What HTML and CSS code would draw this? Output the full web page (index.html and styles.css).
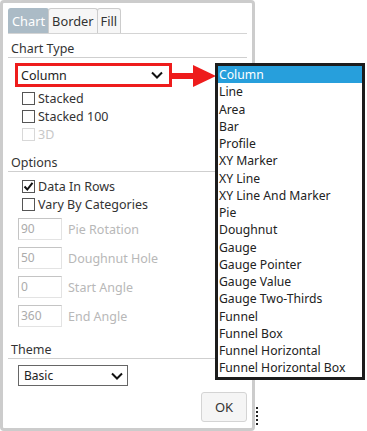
FILE: index.html
```html
<!DOCTYPE html>
<html>
<head>
<meta charset="utf-8">
<link rel="stylesheet" href="styles.css">
</head>
<body>
<div class="page">
  <div class="dialog">
    <div class="tabs">
      <span class="tab active">Chart</span><span class="tab">Border</span><span class="tab">Fill</span>
    </div>

    <div class="sec-head first">Chart Type</div>
    <div class="select red-sel">
      <span>Column</span>
      <svg class="chev" width="12" height="8" viewBox="0 0 12 8"><polyline points="1,1.5 6,6.5 11,1.5" fill="none" stroke="#111" stroke-width="2"/></svg>
    </div>
    <div class="checks first-checks">
      <label class="check"><span class="box"></span>Stacked</label>
      <label class="check"><span class="box"></span>Stacked 100</label>
      <label class="check disabled"><span class="box"></span>3D</label>
    </div>

    <div class="sec-head">Options</div>
    <div class="checks opt-checks">
      <label class="check"><span class="box"><svg width="11" height="11" viewBox="0 0 11 11"><polyline points="1.5,5.5 4.3,8.5 9.5,1.8" fill="none" stroke="#111" stroke-width="2"/></svg></span>Data In Rows</label>
      <label class="check"><span class="box"></span>Vary By Categories</label>
    </div>
    <div class="inputs">
      <div class="field"><span class="inp">90</span><span class="flabel">Pie Rotation</span></div>
      <div class="field"><span class="inp">50</span><span class="flabel">Doughnut Hole</span></div>
      <div class="field"><span class="inp">0</span><span class="flabel">Start Angle</span></div>
      <div class="field"><span class="inp">360</span><span class="flabel">End Angle</span></div>
    </div>

    <div class="sec-head theme-head">Theme</div>
    <div class="select theme-sel">
      <span>Basic</span>
      <svg class="chev" width="12" height="8" viewBox="0 0 12 8"><polyline points="1,1.5 6,6.5 11,1.5" fill="none" stroke="#111" stroke-width="2"/></svg>
    </div>
    <div class="footer"><button class="ok">OK</button></div>
  </div>
  <div class="grip"></div>

  <svg class="arrow" width="46" height="24" viewBox="0 0 46 24">
    <rect x="0" y="9" width="24" height="6" fill="#ee1c1c"/>
    <polygon points="22,1 45,12 22,23" fill="#ee1c1c"/>
  </svg>

  <ul class="dropdown">
    <li class="sel">Column</li>
    <li>Line</li>
    <li>Area</li>
    <li>Bar</li>
    <li>Profile</li>
    <li>XY Marker</li>
    <li>XY Line</li>
    <li>XY Line And Marker</li>
    <li>Pie</li>
    <li>Doughnut</li>
    <li>Gauge</li>
    <li>Gauge Pointer</li>
    <li>Gauge Value</li>
    <li>Gauge Two-Thirds</li>
    <li>Funnel</li>
    <li>Funnel Box</li>
    <li>Funnel Horizontal</li>
    <li>Funnel Horizontal Box</li>
  </ul>
</div>
</body>
</html>
```

FILE: styles.css
```css
* { box-sizing: border-box; }
html, body { margin: 0; padding: 0; background: #fff; }
body {
  font-family: "Noto Sans", "Open Sans", "DejaVu Sans", sans-serif;
  font-size: 12px;
  color: #333;
}
.page {
  position: relative;
  width: 367px;
  height: 431px;
  overflow: hidden;
}
.dialog {
  width: 255px;
  height: 431px;
  border: 3px solid #cccccc;
  border-radius: 4px;
  padding: 5px 5px 5px 5px;
  display: flex;
  flex-direction: column;
  background: #fff;
}
.tabs {
  display: flex;
  height: 26px;
  border-bottom: 1px solid #d4d4d4;
  flex-shrink: 0;
}
.tab {
  height: 25px;
  line-height: 24px;
  padding: 0 3px;
  border: 1px solid #cccccc;
  border-bottom: none;
  border-radius: 3px 3px 0 0;
  background: #f6f6f6;
  color: #333;
  font-size: 12.8px;
}
.tab + .tab { margin-left: -1px; }
.tab.active {
  background: #abbbc6;
  color: #fff;
  border-color: #abbbc6;
}
.sec-head {
  height: 17px;
  line-height: 16px;
  padding-left: 3px;
  border-bottom: 1px solid #cfcfcf;
  margin-top: 12px;
  font-size: 12.5px;
  flex-shrink: 0;
}
.sec-head.first { margin-top: 7px; }
.sec-head.theme-head { margin-top: 15px; }
.select {
  display: flex;
  align-items: center;
  justify-content: space-between;
  background: #fff;
  flex-shrink: 0;
  color: #222;
}
.red-sel {
  margin: 5px 0 0 7px;
  width: 157px;
  height: 24px;
  border: 3px solid #ee1c1c;
  padding: 0 6px 0 3px;
  font-size: 12.5px;
}
.theme-sel {
  margin: 6px 0 0 10px;
  width: 110px;
  height: 21px;
  border: 1px solid #666;
  padding: 0 4px 0 5px;
}
.chev { display: block; }
.checks {
  display: flex;
  flex-direction: column;
  margin-left: 14px;
}
.first-checks { margin-top: 2px; }
.opt-checks { margin-top: 6px; }
.check {
  display: flex;
  align-items: center;
  height: 18px;
  font-size: 12.5px;
  color: #333;
}
.opt-checks .check { height: 17.5px; }
.box {
  width: 13px;
  height: 13px;
  border: 1px solid #555;
  margin-right: 3px;
  background: #fff;
  display: flex;
  align-items: center;
  justify-content: center;
}
.check.disabled { color: #c8c8c8; }
.check.disabled .box { border-color: #d8d8d8; }
.inputs {
  display: flex;
  flex-direction: column;
  gap: 7px;
  margin: 5px 0 0 10px;
}
.field {
  display: flex;
  align-items: center;
  height: 22px;
}
.inp {
  width: 44px;
  height: 22px;
  border: 1px solid #e3e3e3;
  border-top-color: #c4c4c4;
  border-left-color: #c4c4c4;
  color: #ababab;
  padding-left: 2px;
  line-height: 20px;
}
.flabel {
  margin-left: 6px;
  color: #b8b8b8;
  font-size: 12.5px;
}
.footer {
  display: flex;
  justify-content: flex-end;
  margin-top: 6px;
}
.ok {
  width: 46px;
  height: 30px;
  border: 1px solid #d4d4d4;
  border-radius: 3px;
  background: #f5f5f5;
  color: #333;
  font-family: inherit;
  font-size: 13px;
  padding: 0;
}
.grip {
  position: absolute;
  left: 256px;
  top: 407px;
  width: 2px;
  height: 18px;
  border-left: 2px dotted #222;
}
.arrow {
  position: absolute;
  left: 171px;
  top: 64px;
}
.dropdown {
  position: absolute;
  left: 215px;
  top: 63px;
  width: 150px;
  margin: 0;
  padding: 0;
  list-style: none;
  border: 3px solid #1c1c1c;
  background: #fff;
  color: #222;
  font-size: 12.2px;
}
.dropdown li {
  height: 17.25px;
  line-height: 17px;
  padding-left: 1px;
  white-space: nowrap;
}
.dropdown li.sel {
  background: #279fdc;
  color: #fff;
}
```
